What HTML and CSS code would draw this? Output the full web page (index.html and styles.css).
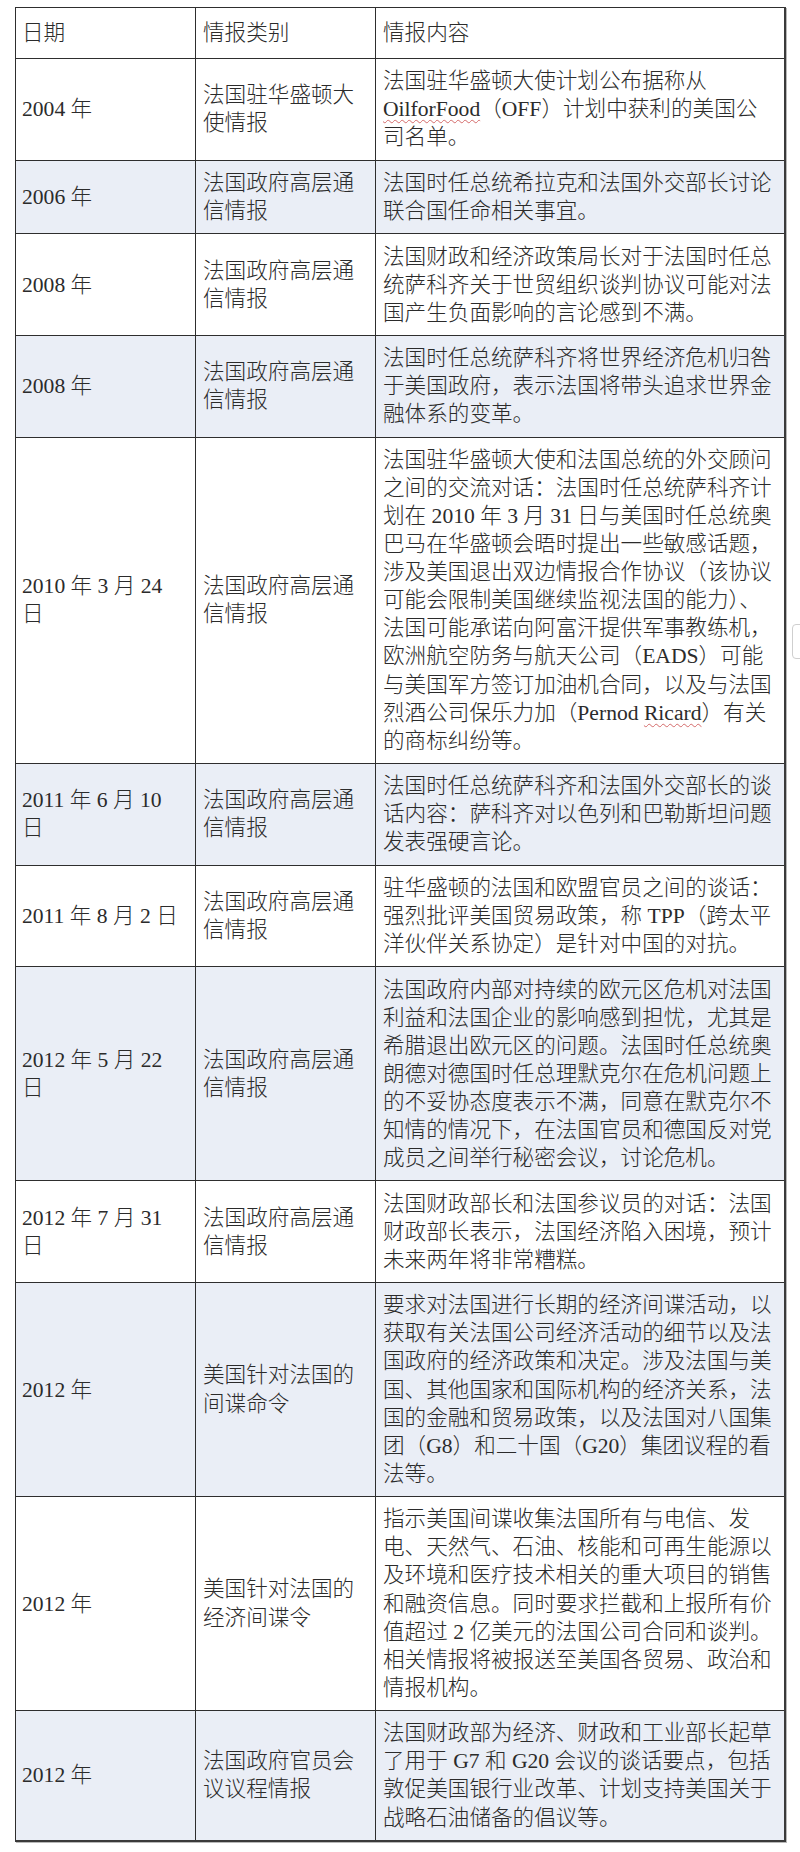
FILE: index.html
```html
<!DOCTYPE html>
<html lang="zh-CN">
<head>
<meta charset="utf-8">
<title>情报表</title>
<link rel="stylesheet" href="styles.css">
</head>
<body>
<table class="intel">
  <colgroup>
    <col class="c-date">
    <col class="c-type">
    <col class="c-content">
  </colgroup>
  <thead>
    <tr class="head">
      <th>日期</th>
      <th>情报类别</th>
      <th>情报内容</th>
    </tr>
  </thead>
  <tbody>
    <tr>
      <td>2004 年</td>
      <td>法国驻华盛顿大<br>使情报</td>
      <td>法国驻华盛顿大使计划公布据称从<br><span class="spell">OilforFood</span>（OFF）计划中获利的美国公<br>司名单。</td>
    </tr>
    <tr class="alt">
      <td>2006 年</td>
      <td>法国政府高层通<br>信情报</td>
      <td>法国时任总统希拉克和法国外交部长讨论<br>联合国任命相关事宜。</td>
    </tr>
    <tr>
      <td>2008 年</td>
      <td>法国政府高层通<br>信情报</td>
      <td>法国财政和经济政策局长对于法国时任总<br>统萨科齐关于世贸组织谈判协议可能对法<br>国产生负面影响的言论感到不满。</td>
    </tr>
    <tr class="alt">
      <td>2008 年</td>
      <td>法国政府高层通<br>信情报</td>
      <td>法国时任总统萨科齐将世界经济危机归咎<br>于美国政府，表示法国将带头追求世界金<br>融体系的变革。</td>
    </tr>
    <tr>
      <td>2010 年 3 月 24<br>日</td>
      <td>法国政府高层通<br>信情报</td>
      <td>法国驻华盛顿大使和法国总统的外交顾问<br>之间的交流对话：法国时任总统萨科齐计<br>划在 2010 年 3 月 31 日与美国时任总统奥<br>巴马在华盛顿会晤时提出一些敏感话题，<br>涉及美国退出双边情报合作协议（该协议<br>可能会限制美国继续监视法国的能力）、<br>法国可能承诺向阿富汗提供军事教练机，<br>欧洲航空防务与航天公司（EADS）可能<br>与美国军方签订加油机合同，以及与法国<br>烈酒公司保乐力加（Pernod <span class="spell">Ricard</span>）有关<br>的商标纠纷等。</td>
    </tr>
    <tr class="alt">
      <td>2011 年 6 月 10<br>日</td>
      <td>法国政府高层通<br>信情报</td>
      <td>法国时任总统萨科齐和法国外交部长的谈<br>话内容：萨科齐对以色列和巴勒斯坦问题<br>发表强硬言论。</td>
    </tr>
    <tr>
      <td>2011 年 8 月 2 日</td>
      <td>法国政府高层通<br>信情报</td>
      <td>驻华盛顿的法国和欧盟官员之间的谈话：<br>强烈批评美国贸易政策，称 TPP（跨太平<br>洋伙伴关系协定）是针对中国的对抗。</td>
    </tr>
    <tr class="alt">
      <td>2012 年 5 月 22<br>日</td>
      <td>法国政府高层通<br>信情报</td>
      <td>法国政府内部对持续的欧元区危机对法国<br>利益和法国企业的影响感到担忧，尤其是<br>希腊退出欧元区的问题。法国时任总统奥<br>朗德对德国时任总理默克尔在危机问题上<br>的不妥协态度表示不满，同意在默克尔不<br>知情的情况下，在法国官员和德国反对党<br>成员之间举行秘密会议，讨论危机。</td>
    </tr>
    <tr>
      <td>2012 年 7 月 31<br>日</td>
      <td>法国政府高层通<br>信情报</td>
      <td>法国财政部长和法国参议员的对话：法国<br>财政部长表示，法国经济陷入困境，预计<br>未来两年将非常糟糕。</td>
    </tr>
    <tr class="alt">
      <td>2012 年</td>
      <td>美国针对法国的<br>间谍命令</td>
      <td>要求对法国进行长期的经济间谍活动，以<br>获取有关法国公司经济活动的细节以及法<br>国政府的经济政策和决定。涉及法国与美<br>国、其他国家和国际机构的经济关系，法<br>国的金融和贸易政策，以及法国对八国集<br>团（G8）和二十国（G20）集团议程的看<br>法等。</td>
    </tr>
    <tr>
      <td>2012 年</td>
      <td>美国针对法国的<br>经济间谍令</td>
      <td>指示美国间谍收集法国所有与电信、发<br>电、天然气、石油、核能和可再生能源以<br>及环境和医疗技术相关的重大项目的销售<br>和融资信息。同时要求拦截和上报所有价<br>值超过 2 亿美元的法国公司合同和谈判。<br>相关情报将被报送至美国各贸易、政治和<br>情报机构。</td>
    </tr>
    <tr class="alt">
      <td>2012 年</td>
      <td>法国政府官员会<br>议议程情报</td>
      <td>法国财政部为经济、财政和工业部长起草<br>了用于 G7 和 G20 会议的谈话要点，包括<br>敦促美国银行业改革、计划支持美国关于<br>战略石油储备的倡议等。</td>
    </tr>
  </tbody>
</table>
<div class="edge-tab"></div>
</body>
</html>
```

FILE: styles.css
```css
html, body {
  margin: 0;
  padding: 0;
  background: #ffffff;
}

body {
  position: relative;
  width: 800px;
  min-height: 1852px;
  overflow: hidden;
  padding-top: 7px;
  padding-left: 15px;
  box-sizing: border-box;
  font-family: "Liberation Serif", "Noto Sans CJK SC", serif;
  color: #2b2b2b;
}

.intel {
  border-collapse: collapse;
  table-layout: fixed;
  width: 769px;
  font-size: 21.6px;
  line-height: 28.1px;
  border-right: 2px solid #3a3a3a;
  border-bottom: 2px solid #3a3a3a;
  box-shadow: 1px 1px 0 #b8b8b8;
}

.c-date { width: 180px; }
.c-type { width: 180px; }
.c-content { width: 409px; }

.intel th,
.intel td {
  border: 1px solid #2e2e2e;
  padding: 8.2px 6px 8.2px 7px;
  text-align: left;
  vertical-align: middle;
  white-space: nowrap;
  font-weight: 300;
}

.intel th {
  padding-top: 11px;
  padding-bottom: 11px;
}

.intel td:first-child,
.intel th:first-child {
  padding-left: 6px;
}

.intel tr.alt td {
  background: #eaeef6;
}

.spell {
  text-decoration: underline wavy #d46a6a;
  text-decoration-thickness: 1px;
  text-underline-offset: 3px;
}

.edge-tab {
  position: absolute;
  left: 792px;
  top: 624px;
  width: 20px;
  height: 33px;
  border: 1px solid #cfcfcf;
  border-radius: 4px;
  background: #ffffff;
}
```
